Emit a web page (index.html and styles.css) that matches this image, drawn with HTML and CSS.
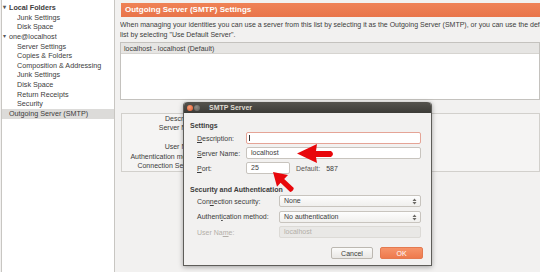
FILE: index.html
```html
<!DOCTYPE html>
<html lang="en">
<head>
    <meta charset="UTF-8">
    <meta name="viewport" content="width=device-width, initial-scale=1.0">
    <title>Account Settings</title>
    <link rel="stylesheet" href="styles.css">
</head>
<body>
    <div class="window">
        <aside class="sidebar">
            <ul class="tree">
                <li class="account bold"><span class="twisty">▾</span>Local Folders</li>
                <li class="sub">Junk Settings</li>
                <li class="sub">Disk Space</li>
                <li class="account"><span class="twisty">▾</span>one@localhost</li>
                <li class="sub">Server Settings</li>
                <li class="sub">Copies &amp; Folders</li>
                <li class="sub">Composition &amp; Addressing</li>
                <li class="sub">Junk Settings</li>
                <li class="sub">Disk Space</li>
                <li class="sub">Return Receipts</li>
                <li class="sub">Security</li>
                <li class="account selected">Outgoing Server (SMTP)</li>
            </ul>
        </aside>

        <main class="content">
            <h1 class="banner">Outgoing Server (SMTP) Settings</h1>
            <p class="intro">When managing your identities you can use a server from this list by selecting it as the Outgoing Server (SMTP), or you can use the default server from this<br>list by selecting "Use Default Server".</p>

            <div class="server-list">
                <div class="server-row">localhost - localhost (Default)</div>
            </div>

            <!-- labels of the selected server; the dialog sits over their right half -->
            <div class="details">
                <span>Description:</span>
                <span>Server Name:</span>
                <span>Port:</span>
                <span>User Name:</span>
                <span>Authentication method:</span>
                <span>Connection Security:</span>
            </div>
        </main>
    </div>

    <div class="dialog">
        <div class="titlebar">
            <span class="dot close"></span>
            <span class="dot minimize"></span>
            <span class="title">SMTP Server</span>
        </div>
        <div class="dialog-body">
            <h2>Settings</h2>
            <div class="form settings">
                <label><u>D</u>escription:</label>
                <div class="field focused"><span class="caret"></span></div>
                <label><u>S</u>erver Name:</label>
                <div class="field">localhost</div>
                <label><u>P</u>ort:</label>
                <div class="port-row">
                    <div class="field port">25</div>
                    <span class="default-label">Default:</span>
                    <span>587</span>
                </div>
            </div>

            <h2 class="second">Security and Authentication</h2>
            <div class="form security">
                <label>Con<u>n</u>ection security:</label>
                <div class="field select">None<svg class="spin" width="5" height="7" viewBox="0 0 5 7"><path d="M0.5 3 L2.5 0.5 L4.5 3 Z M0.5 4 L2.5 6.5 L4.5 4 Z" fill="#6a6864"/></svg></div>
                <label>Authent<u>i</u>cation method:</label>
                <div class="field select">No authentication<svg class="spin" width="5" height="7" viewBox="0 0 5 7"><path d="M0.5 3 L2.5 0.5 L4.5 3 Z M0.5 4 L2.5 6.5 L4.5 4 Z" fill="#6a6864"/></svg></div>
                <label class="disabled">User Na<u>m</u>e:</label>
                <div class="field disabled">localhost</div>
            </div>

            <div class="buttons">
                <button class="btn">Cancel</button>
                <button class="btn ok">OK</button>
            </div>
        </div>
    </div>

    <!-- red annotation arrows drawn on top of the screenshot -->
    <svg class="arrows" width="540" height="272" viewBox="0 0 540 272">
        <path d="M297 153.5 L317 144 L316 151 L331 151 Q335 154 331 157 L316 157 L317 163 Z" fill="#e8070b"/>
        <path d="M273 172 L288 175 L284.2 179 L293.8 188.1 Q293 192 290.2 191.9 L280.6 182.8 L277 186.7 Z" fill="#e8070b"/>
    </svg>
</body>
</html>
```

FILE: styles.css
```css
* {
    box-sizing: border-box;
}

body {
    margin: 0;
    width: 540px;
    height: 272px;
    overflow: hidden;
    background: #f2f1f0;
    color: #3c3c3c;
    font-family: "Liberation Sans", Arial, sans-serif;
    font-size: 7px;
    position: relative;
}

.window {
    display: flex;
    height: 272px;
}

/* left account tree */
.sidebar {
    width: 114px;
    margin-left: 1px;
    background: #fff;
    border-left: 1px solid #c8c6c2;
    border-right: 1px solid #c8c6c2;
    flex-shrink: 0;
}

.tree {
    list-style: none;
    margin: 0;
    padding: 3px 0 0;
    font-size: 7.2px;
}

.tree li {
    height: 9.65px;
    line-height: 9.65px;
    white-space: nowrap;
    padding-left: 7px;
    position: relative;
}

.tree .sub {
    padding-left: 15px;
}

.tree .bold {
    font-weight: bold;
}

.twisty {
    position: absolute;
    left: 1px;
    font-size: 6px;
    color: #555;
}

.tree .selected {
    background: #dcdbd9;
}

/* right side */
.content {
    flex: 1;
    min-width: 0;
    margin-left: 5px;
    overflow: hidden;
}

.banner {
    margin: 3px 0 0 1px;
    height: 14px;
    line-height: 14px;
    padding-left: 4px;
    background: linear-gradient(#ef8256, #e8744a);
    color: #fff;
    font-size: 8px;
    font-weight: bold;
    white-space: nowrap;
}

.intro {
    margin: 3px 0 0;
    line-height: 9.5px;
    white-space: nowrap;
}

.server-list {
    margin-top: 3px;
    height: 58px;
    background: #fff;
    border: 1px solid #c4c2be;
}

.server-row {
    height: 11px;
    line-height: 11px;
    padding-left: 3px;
    background: #e6e5e3;
    border-bottom: 1px solid #d6d4d0;
}

.details {
    margin: 13px 0 0 1px;
    height: 59px;
    border: 1px solid #d2d0cc;
    background: #f5f4f3;
    display: grid;
    grid-template-columns: 80px;
    grid-auto-rows: 9.4px;
    line-height: 9.4px;
    text-align: right;
    white-space: nowrap;
}

/* SMTP dialog over the page */
.dialog {
    position: absolute;
    left: 183px;
    top: 102px;
    width: 249px;
    height: 164px;
    background: #f2f1f0;
    border: 1px solid #5e5d59;
    border-top: none;
    border-radius: 4px 4px 0 0;
    box-shadow: 0 1px 5px rgba(0, 0, 0, 0.35);
}

.titlebar {
    height: 11px;
    display: flex;
    align-items: center;
    gap: 1px;
    padding-left: 3px;
    background: linear-gradient(#55534e, #3c3b37);
    border-radius: 4px 4px 0 0;
}

.dot {
    width: 6px;
    height: 6px;
    border-radius: 50%;
}

.close {
    background: radial-gradient(circle at 40% 35%, #f7a07a, #e0572b);
}

.minimize {
    background: radial-gradient(circle at 40% 35%, #8f8d88, #5d5b56);
}

.title {
    margin-left: 8px;
    color: #dfdbd2;
    font-weight: bold;
    font-size: 7px;
}

.dialog-body {
    padding: 8px 10px 0 6px;
}

.dialog-body h2 {
    margin: 0;
    font-size: 7px;
    line-height: 9px;
    font-weight: bold;
}

.dialog-body h2.second {
    margin-top: 10.5px;
}

.form {
    display: grid;
    align-items: center;
    margin-left: 7px;
}

.settings {
    margin-top: 2px;
    grid-template-columns: 49px 1fr;
    grid-auto-rows: 12px;
    row-gap: 3px;
}

.security {
    margin-top: 1.5px;
    grid-template-columns: 82px 1fr;
    grid-auto-rows: 12px;
    row-gap: 3.5px;
}

label u {
    text-decoration: underline;
}

.field {
    height: 12px;
    line-height: 10px;
    padding-left: 4px;
    background: #fff;
    border: 1px solid #c8c4be;
    border-radius: 2px;
    position: relative;
}

.field.focused {
    border-color: #e5a496;
}

.caret {
    position: absolute;
    left: 2px;
    top: 2px;
    width: 1px;
    height: 6px;
    background: #333;
}

.port-row {
    display: flex;
    align-items: center;
}

.field.port {
    width: 44px;
}

.default-label {
    margin: 0 6px 0 6px;
    color: #5a5854;
}

.field.select {
    background: linear-gradient(#fdfdfd, #f0efed);
}

.spin {
    position: absolute;
    right: 3px;
    top: 2px;
}

label.disabled {
    color: #b3afa8;
}

.field.disabled {
    background: #e9e8e6;
    border-color: #dcdad6;
    color: #b3afa8;
}

.buttons {
    display: flex;
    justify-content: flex-end;
    gap: 7px;
    margin: 9px -2px 0 0;
}

.btn {
    height: 12px;
    padding: 0;
    font-family: inherit;
    font-size: 7px;
    color: #3c3c3c;
    border: 1px solid #bcb8b1;
    border-radius: 2px;
    background: linear-gradient(#fbfbfa, #e9e7e4);
    width: 42px;
}

.btn.ok {
    width: 43px;
    color: #fff;
    border-color: #e47a50;
    background: linear-gradient(#f6946a, #ee7a4d);
}

.arrows {
    position: absolute;
    left: 0;
    top: 0;
    pointer-events: none;
}
```
